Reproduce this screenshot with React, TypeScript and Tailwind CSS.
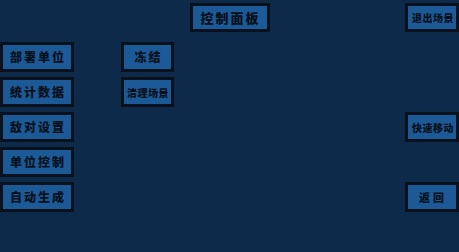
import type { ReactNode } from 'react'

const font = { fontFamily: '"Noto Sans CJK SC", "Noto Sans", sans-serif' }

function Btn({ children, className = '' }: { children: ReactNode; className?: string }) {
  return (
    <div
      className={`flex items-center justify-center border-[3px] border-[#08111c] bg-[#1b5a96] font-black text-[#07111c] ${className}`}
    >
      {children}
    </div>
  )
}

export default function App() {
  return (
    <div className="h-[252px] w-[459px] overflow-hidden bg-[#0d2a4b]" style={font}>
      {/* 顶部 */}
      <div className="grid grid-cols-[1fr_auto_1fr] items-start pt-[3px]">
        <div />
        <Btn className="h-[29px] w-[80px] pl-[2px] text-[13px] tracking-[2px]">控制面板</Btn>
        <div className="flex justify-end">
          <Btn className="h-[29px] w-[54px] pl-[2px] text-[10px] tracking-[0.5px]">退出场景</Btn>
        </div>
      </div>

      {/* 按钮网格 */}
      <div className="mt-[10px] grid grid-cols-[74px_53px_1fr_54px] grid-rows-[30px_30px_30px_30px_30px] gap-x-[47px] gap-y-[5px]">
        <Btn className="col-start-1 row-start-1 pl-[2px] text-[12px] tracking-[2px]">部署单位</Btn>
        <Btn className="col-start-1 row-start-2 pl-[2px] text-[12px] tracking-[2px]">统计数据</Btn>
        <Btn className="col-start-1 row-start-3 pl-[2px] text-[12px] tracking-[2px]">敌对设置</Btn>
        <Btn className="col-start-1 row-start-4 pl-[2px] text-[12px] tracking-[2px]">单位控制</Btn>
        <Btn className="col-start-1 row-start-5 pl-[2px] text-[12px] tracking-[2px]">自动生成</Btn>

        <Btn className="col-start-2 row-start-1 pl-[2px] text-[12px] tracking-[2px]">冻结</Btn>
        <Btn className="col-start-2 row-start-2 pl-[1px] text-[10px] tracking-[0.5px]">清理场景</Btn>

        <Btn className="col-start-4 row-start-3 pl-[2px] text-[10px] tracking-[0.5px]">快速移动</Btn>
        <Btn className="col-start-4 row-start-5 pl-[2px] text-[11px] tracking-[3px]">返回</Btn>
      </div>
    </div>
  )
}
